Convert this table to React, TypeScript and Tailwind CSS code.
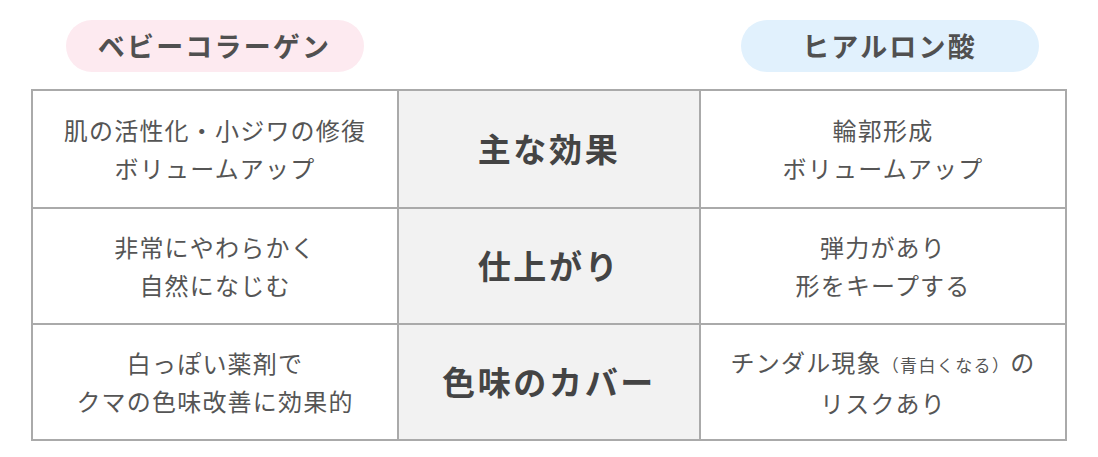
import React from "react";

type Row = {
  left: React.ReactNode;
  label: string;
  right: React.ReactNode;
};

const rows: Row[] = [
  {
    left: (
      <>
        肌の活性化・小ジワの修復
        <br />
        ボリュームアップ
      </>
    ),
    label: "主な効果",
    right: (
      <>
        輪郭形成
        <br />
        ボリュームアップ
      </>
    ),
  },
  {
    left: (
      <>
        非常にやわらかく
        <br />
        自然になじむ
      </>
    ),
    label: "仕上がり",
    right: (
      <>
        弾力があり
        <br />
        形をキープする
      </>
    ),
  },
  {
    left: (
      <>
        白っぽい薬剤で
        <br />
        クマの色味改善に効果的
      </>
    ),
    label: "色味のカバー",
    right: (
      <>
        チンダル現象
        <span className="text-[17px] tracking-[0.08em]">（青白くなる）</span>
        の
        <br />
        リスクあり
      </>
    ),
  },
];

export default function App() {
  return (
    <div
      className="w-[1098px] h-[457px] bg-white text-[#555]"
      style={{ fontFamily: '"Noto Sans CJK JP", "Noto Sans", sans-serif' }}
    >
      <div className="pl-[31px] pt-[20px]">
        <div className="grid grid-cols-[367px_302px_367px]">
          <div className="flex justify-center">
            <div className="h-[52px] w-[298px] rounded-full bg-[#fdeaf0] flex items-center justify-center text-[27px] font-bold tracking-[0.08em] text-[#505050]">
              ベビーコラーゲン
            </div>
          </div>
          <div />
          <div className="flex justify-center pl-[12px]">
            <div className="h-[52px] w-[298px] rounded-full bg-[#e1f1fd] flex items-center justify-center text-[27px] font-bold tracking-[0.08em] text-[#505050]">
              ヒアルロン酸
            </div>
          </div>
        </div>

        <div className="mt-[17px] w-[1036px] border-2 border-[#aaa] grid grid-cols-[364px_304px_364px]">
          {rows.map((r, i) => (
            <React.Fragment key={i}>
              <div
                className={`h-[116px] flex items-center justify-center text-center text-[24px] leading-[38px] tracking-[0.05em] ${
                  i > 0 ? "border-t-2 border-[#aaa]" : ""
                }`}
              >
                <div>{r.left}</div>
              </div>
              <div
                className={`h-[116px] bg-[#f2f2f2] border-x-2 border-[#aaa] flex items-center justify-center text-[33px] font-bold tracking-[0.08em] text-[#444] ${
                  i > 0 ? "border-t-2" : ""
                }`}
              >
                {r.label}
              </div>
              <div
                className={`h-[116px] flex items-center justify-center text-center text-[24px] leading-[38px] tracking-[0.05em] ${
                  i > 0 ? "border-t-2 border-[#aaa]" : ""
                }`}
              >
                <div>{r.right}</div>
              </div>
            </React.Fragment>
          ))}
        </div>
      </div>
    </div>
  );
}
